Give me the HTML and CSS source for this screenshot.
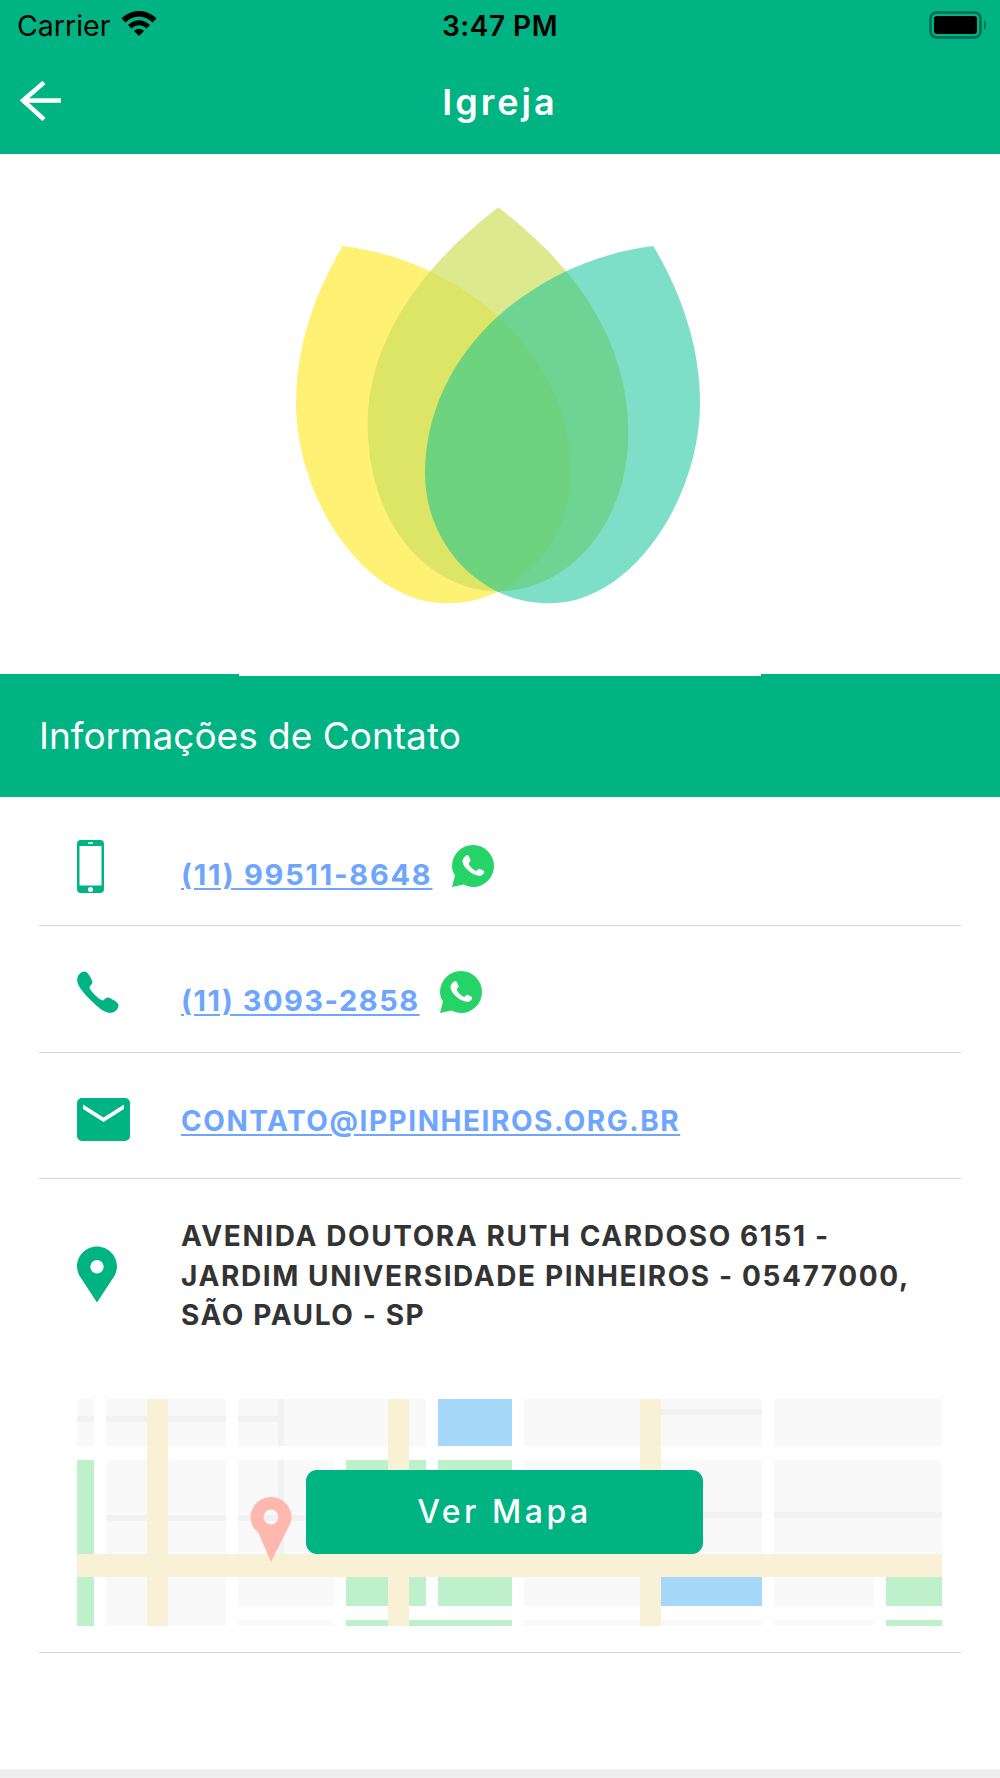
FILE: index.html
```html
<!DOCTYPE html>
<html lang="pt">
<head>
<meta charset="utf-8">
<title>Igreja</title>
<link rel="stylesheet" href="styles.css">
</head>
<body>
<div class="app">
  <header class="topbar">
    <div class="status">
      <span class="carrier">Carrier</span>
      <svg class="wifi" viewBox="0 0 36 26"><path d="M0.500 8.500C10 -1.500 26 -1.500 35.500 8.500L31.500 12.500C24 4.500 12 4.500 4.500 12.500Z"/><path d="M7 15C13.500 8.500 22.500 8.500 29 15L25.500 18.500C21 14 15 14 10.500 18.500Z"/><path d="M13 21C16 18 20 18 23 21L18 26Z"/></svg>
      <span class="time">3:47 PM</span>
      <svg class="battery" viewBox="0 0 58 28"><rect class="battery-case" x="1.500" y="1.500" width="50" height="25" rx="6"/><rect class="battery-fill" x="5" y="5" width="43" height="18" rx="3"/><path class="battery-cap" d="M55 9C57.500 11 57.500 17 55 19Z"/></svg>
    </div>
    <nav class="nav">
      <svg class="back" viewBox="0 0 42 40"><path d="M41 19.500H3M24 1.500L3 19.500L24 38.500"/></svg>
      <h1 class="title">Igreja</h1>
    </nav>
  </header>

  <section class="logo-band">
    <div class="logo-box">
      <svg class="logo" viewBox="0 0 1350 1290">
        <path class="petal-left" d="M218 168C400 190 560 270 680 375C830 510 903 680 903 850C903 1060 740 1240 530 1240C278 1240 78 920 78 640C78 460 140 300 218 168Z"/>
        <path class="petal-mid" d="M685 52C810 150 1075 370 1075 730C1075 1000 900 1200 685 1205C470 1200 293 1000 293 700C293 400 530 170 685 52Z"/>
        <path class="petal-right" d="M1150 168C968 190 808 270 688 375C538 510 465 680 465 850C465 1060 628 1240 838 1240C1090 1240 1290 920 1290 640C1290 460 1228 300 1150 168Z"/>
      </svg>
    </div>
  </section>

  <h2 class="section-head">Informações de Contato</h2>

  <ul class="contacts">
    <li class="row row-mobile">
      <span class="icon-col">
        <svg class="i-mobile" viewBox="0 0 27 53"><path fill-rule="evenodd" d="M4 0H23A4 4 0 0 1 27 4V49A4 4 0 0 1 23 53H4A4 4 0 0 1 0 49V4A4 4 0 0 1 4 0ZM2.500 6V45.500H24.500V6ZM11 2.300V3.700H16V2.300ZM13.500 47A2.500 2.500 0 1 0 13.500 52A2.500 2.500 0 1 0 13.500 47Z"/></svg>
      </span>
      <a class="link link-num" href="#">(11) 99511-8648</a>
      <svg class="wa" viewBox="0 0 42 42"><use href="#wa-glyph"/></svg>
    </li>
    <li class="row row-phone">
      <span class="icon-col">
        <svg class="i-phone" viewBox="0 0 42 42"><path d="M2 3.500C4.500 0.500 8 -0.500 10 1.500C12 3.500 15 8.500 15.500 11C15.800 13 13 14.500 12.500 16C12.300 17.500 14.500 20.500 18 24C21.500 27.500 24.500 29.700 26 29.500C27.500 29 29 26.200 31 26.500C33.500 27 38.500 30 40.500 32C42.500 34 41.500 37.500 38.500 40C35.500 42.500 31 42.500 26 39.500C20 36 6 22 2.500 16C-0.500 11 -0.500 6.500 2 3.500Z"/></svg>
      </span>
      <a class="link link-num" href="#">(11) 3093-2858</a>
      <svg class="wa" viewBox="0 0 42 42"><use href="#wa-glyph"/></svg>
    </li>
    <li class="row row-mail">
      <span class="icon-col">
        <svg class="i-mail" viewBox="0 0 53 43"><path fill-rule="evenodd" d="M5 0H48A5 5 0 0 1 53 5V38A5 5 0 0 1 48 43H5A5 5 0 0 1 0 38V5A5 5 0 0 1 5 0ZM6 6.500V11L26.500 24L47 11V6.500L26.500 19.500Z"/></svg>
      </span>
      <a class="link" href="#">CONTATO@IPPINHEIROS.ORG.BR</a>
    </li>
    <li class="place">
      <div class="address-line">
        <span class="icon-col">
          <svg class="i-pin" viewBox="0 0 40 56"><path fill-rule="evenodd" d="M20 0C31 0 40 9 40 20C40 23 39 26 38 28.500L20 56L2 28.500C1 26 0 23 0 20C0 9 9 0 20 0ZM20 13.500A6.700 6.700 0 1 0 20 26.900A6.700 6.700 0 1 0 20 13.500Z"/></svg>
        </span>
        <p class="address">AVENIDA DOUTORA RUTH CARDOSO 6151 - JARDIM UNIVERSIDADE PINHEIROS - 05477000, SÃO PAULO - SP</p>
      </div>
      <div class="map-wrap">
        <svg class="map" viewBox="77 1399 865 227">
          <g class="b-gray">
            <rect x="77" y="1399" width="17" height="47"/>
            <rect x="106" y="1399" width="120" height="47"/>
            <rect x="238" y="1399" width="188" height="47"/>
            <rect x="524" y="1399" width="238" height="47"/>
            <rect x="774" y="1399" width="168" height="47"/>
            <rect x="106" y="1460" width="120" height="166"/>
            <rect x="238" y="1460" width="96" height="146"/>
            <rect x="524" y="1460" width="238" height="146"/>
            <rect x="774" y="1460" width="168" height="94"/>
            <rect x="774" y="1577" width="100" height="29"/>
            <rect x="238" y="1620" width="96" height="6"/>
            <rect x="524" y="1620" width="238" height="6"/>
            <rect x="774" y="1620" width="100" height="6"/>
          </g>
          <g class="b-line">
            <rect x="77" y="1416" width="17" height="6"/>
            <rect x="106" y="1416" width="120" height="6"/>
            <rect x="238" y="1416" width="40" height="6"/>
            <rect x="278" y="1399" width="6" height="47"/>
            <rect x="278" y="1460" width="6" height="94"/>
            <rect x="106" y="1515" width="120" height="6"/>
            <rect x="238" y="1515" width="96" height="6"/>
            <rect x="661" y="1409" width="101" height="6"/>
            <rect x="661" y="1512" width="101" height="6"/>
            <rect x="774" y="1512" width="168" height="6"/>
          </g>
          <g class="b-green">
            <rect x="77" y="1460" width="17" height="166"/>
            <rect x="346" y="1460" width="80" height="146"/>
            <rect x="438" y="1460" width="74" height="146"/>
            <rect x="346" y="1620" width="166" height="6"/>
            <rect x="886" y="1577" width="56" height="29"/>
            <rect x="886" y="1620" width="56" height="6"/>
          </g>
          <g class="b-blue">
            <rect x="438" y="1399" width="74" height="47"/>
            <rect x="661" y="1577" width="101" height="29"/>
          </g>
          <g class="b-road">
            <rect x="147" y="1399" width="21" height="227"/>
            <rect x="388" y="1399" width="21" height="227"/>
            <rect x="640" y="1399" width="21" height="227"/>
            <rect x="77" y="1554" width="865" height="23"/>
          </g>
          <path class="map-pin" fill-rule="evenodd" d="M271 1497C282 1497 291.500 1506 291.500 1517C291.500 1521 290.500 1524 288.500 1527L271 1562L258.500 1533C253.500 1529 250.500 1523 250.500 1517C250.500 1506 260 1497 271 1497ZM271 1509.500A7.500 7.500 0 1 0 271 1524.500A7.500 7.500 0 1 0 271 1509.500Z"/>
        </svg>
        <a class="map-btn" href="#">Ver Mapa</a>
      </div>
    </li>
  </ul>
  <div class="spacer"></div>
  <div class="footer-strip"></div>
</div>

<svg class="defs" width="0" height="0">
  <symbol id="wa-glyph" viewBox="0 0 42 42">
    <path fill="#25d366" d="M0 42L3 30.500C1 27.500 0 24.500 0 21A21 21 0 1 1 21 42C17.500 42 14.500 41 11.500 39.500Z"/>
    <path fill="#fff" d="M14 10.500C15 10 16 10 16.500 10.500L18.500 15C18.800 15.700 18 16.800 17 18C16.600 18.500 16.600 19 17 19.600C18.700 22.500 20.500 24.300 23.700 25.700C24.300 26 24.800 25.900 25.200 25.400C26 24.400 26.700 23.500 27.400 23.700L31.700 25.800C32.200 26.100 32.300 27 31.900 28C31.200 29.900 28.800 31 26.800 30.800C20.500 30 12.400 23.500 10.700 17.700C10 15 11.500 12 14 10.500Z"/>
  </symbol>
</svg>
</body>
</html>
```

FILE: styles.css
```css
* { box-sizing: border-box; }
html, body { margin: 0; padding: 0; background: #fff; }
body { font-family: Inter, "Liberation Sans", sans-serif; }
.app { width: 1000px; height: 1778px; display: flex; flex-direction: column; overflow: hidden; }

.topbar { background: #00b383; height: 154px; display: flex; flex-direction: column; }
.status { height: 54px; display: flex; align-items: center; padding: 0 13px 0 17px; position: relative; color: #000; }
.carrier { font-size: 28.500px; line-height: 50px; margin-bottom: 2px; }
.wifi { width: 36px; height: 26px; margin-left: 11px; margin-top: -9px; fill: #000; }
.time { font-size: 28px; font-weight: 600; letter-spacing: .5px; position: absolute; left: 442px; top: 0; line-height: 52px; }
.battery { width: 58px; height: 28px; margin-left: auto; margin-top: -4px; }
.battery-case { fill: none; stroke: #000; stroke-opacity: .4; stroke-width: 2.500; }
.battery-fill { fill: #000; }
.battery-cap { fill: #000; fill-opacity: .4; }

.nav { flex: 1; position: relative; display: flex; align-items: center; justify-content: center; padding-bottom: 4px; }
.back { position: absolute; left: 20px; top: 27px; width: 42px; height: 40px; fill: none; stroke: #fff; stroke-width: 4.500; }
.title { margin: 0; font-size: 36px; font-weight: 600; color: #fff; letter-spacing: 3px; line-height: 1; }

.logo-band { height: 520px; display: flex; justify-content: center; }
.logo-box { width: 522px; height: 522px; background: #fff; position: relative; z-index: 1; padding: 36px 0 0 31px; }
.logo { display: block; width: 450px; height: 430px; }
.petal-left { fill: rgb(255, 230, 0); fill-opacity: .55; }
.petal-mid { fill: rgb(205, 224, 96); fill-opacity: .71; }
.petal-right { fill: rgb(8, 194, 152); fill-opacity: .52; }

.section-head { margin: 0; height: 123px; background: #00b383; color: #fff; font-size: 37px; font-weight: 400; line-height: 123px; padding: 0 0 0 39px; }

.contacts { list-style: none; margin: 0 39px; padding: 0; }
.row { display: flex; align-items: flex-start; border-bottom: 1px solid #d6d6d6; height: 126.500px; }
.row-mobile { height: 129px; padding-top: 43px; }
.row-phone { padding-top: 43px; }
.row-mail { padding-top: 45px; }
.icon-col { width: 142px; flex: none; padding-left: 38px; display: block; }
.icon-col svg { display: block; fill: #00b383; }
.link { font-size: 28px; font-weight: 700; letter-spacing: 1.550px; color: #6ea5ff; line-height: 34px; text-decoration: underline; text-underline-offset: 3px; }
.link-num { font-size: 29px; letter-spacing: 1.750px; }
.row-phone .link-num { letter-spacing: 1.500px; }
.row-mobile .link { margin-top: 18px; }
.row-phone .link { margin-top: 15px; }
.row-mail .link { margin-top: 6px; }
.wa { flex: none; width: 42px; height: 42px; }
.row-mobile .wa { margin: 5px 0 0 20px; }
.row-phone .wa { margin: 2px 0 0 20px; }
.i-mobile { width: 27px; height: 53px; }
.i-phone { width: 42px; height: 42px; margin-top: 2px; }
.i-mail { width: 53px; height: 43px; }
.i-pin { width: 40px; height: 57px; margin-top: 67px; }

.place { border-bottom: 1px solid #d6d6d6; height: 474px; }
.address-line { display: flex; align-items: flex-start; height: 220px; }
.address { margin: 38px 0 0; font-size: 28px; font-weight: 700; line-height: 39.500px; color: #333; letter-spacing: 1.600px; width: 745px; }
.map-wrap { position: relative; margin-left: 38px; width: 865px; height: 227px; }
.map { display: block; width: 865px; height: 227px; }
.b-gray { fill: #f9f9f9; }
.b-line { fill: #f1f1f1; }
.b-green { fill: #bef0cb; }
.b-blue { fill: #a6d9f9; }
.b-road { fill: #f9f1d5; }
.map-pin { fill: #ffb8b0; }
.map-btn { position: absolute; left: 229px; top: 71px; width: 397px; height: 84px; background: #00b383; border-radius: 11px; color: #fff; font-size: 32px; font-weight: 500; letter-spacing: 3.500px; line-height: 84px; text-align: center; text-decoration: none; }

.spacer { flex: 1; }
.footer-strip { height: 9px; background: #eeeeee; }
.defs { position: absolute; }
```
